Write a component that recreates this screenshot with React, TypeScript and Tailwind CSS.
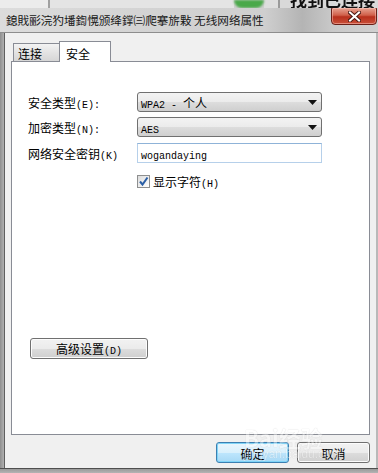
import type { ReactNode } from 'react'

const cjk = "font-['Noto_Sans_CJK_SC',sans-serif]"
const mono = "font-['Liberation_Mono','Noto_Sans_CJK_SC',monospace]"

// SimSun-like mixed text: CJK at 12px, latin as narrow mono
function Sim({ text }: { text: string }) {
  const parts = text.split(/([\u3000-\u9fff\uff00-\uffef]+)/).filter(Boolean)
  return (
    <span className="whitespace-pre">
      {parts.map((p, i) =>
        /[\u3000-\u9fff\uff00-\uffef]/.test(p) ? (
          <span key={i} className={`${cjk} text-[12px]`}>
            {p}
          </span>
        ) : (
          <span key={i} className={`${mono} text-[10px]`}>
            {p}
          </span>
        ),
      )}
    </span>
  )
}

function Combo({ value }: { value: string }) {
  return (
    <div className="flex h-[20px] w-[185px] items-center justify-between rounded-[3px] border border-[#707070] bg-[linear-gradient(#f3f3f3,#ebebeb_50%,#dddddd_50%,#cfcfcf)] pl-[3px] pr-[4px] leading-none text-black">
      <Sim text={value} />
      <svg width="9" height="5" viewBox="0 0 9 5">
        <path d="M0 0h9L4.5 5z" fill="#111" />
      </svg>
    </div>
  )
}

function WinButton({ children, primary, className }: { children: ReactNode; primary?: boolean; className?: string }) {
  return (
    <div
      className={`flex items-center justify-center rounded-[3px] border leading-none text-black ${
        primary
          ? 'border-[#3c7fb1] bg-[linear-gradient(#eaf6fd,#d9f0fc_50%,#bee6fd_50%,#a7d9f5)] shadow-[inset_0_0_0_1px_#7fd4f7]'
          : 'border-[#707070] bg-[linear-gradient(#f2f2f2,#ebebeb_50%,#dddddd_50%,#cfcfcf)] shadow-[inset_0_0_0_1px_#fcfcfc]'
      } ${className ?? ''}`}
    >
      {children}
    </div>
  )
}

export default function App() {
  return (
    <div className="relative h-[473px] w-[378px] overflow-hidden bg-[#a3a3a3] text-black">
      {/* glass title bar */}
      <div className="relative flex h-[33px] items-start border-b border-[#8d8d8d] bg-[linear-gradient(to_right,#dcdcdc,#d3d3d3_40%,#cfcfcf_70%,#b4b4b4_80%,#c9c9c9_88%,#d0d0d0)]">
        <div className="absolute left-0 right-0 top-0 flex h-[8px] overflow-hidden">
          <div className="w-[48px] bg-[#ececec]" />
          <div className="w-[2px] bg-[#a0a0a0]" />
          <div className="w-[184px] bg-[#e4e4e4]" />
          <div className="h-[8px] w-[30px] rounded-b-full bg-[#4aa94a] blur-[1px]" />
          <div className="w-[14px] bg-[#dedede]" />
          <div className="w-[2px] bg-[#9a9a9a]" />
          <div className="flex-1 overflow-hidden bg-[#d9d9d9] pl-[10px]">
            <div className={`${cjk} -mt-[9px] text-[17px] font-bold leading-none text-[#111] blur-[0.4px]`}>找到已连接的</div>
          </div>
        </div>
        <div className={`${cjk} pl-[6px] pt-[12px] text-[11.6px] leading-[16px] text-[#161616]`}>
          鎴戝彨浣犳墦鍧愰颁绛鐣㈢爬搴旂敤 无线网络属性
        </div>
        <div className="ml-auto mr-[1px] mt-[7px] flex h-[18px] w-[46px] items-center justify-center rounded-b-[4px] rounded-t-[2px] border border-[#6a2018] bg-[linear-gradient(#e8a493,#d0604a_45%,#b8301c_55%,#c9503a)] shadow-[inset_0_0_0_1px_rgba(255,200,190,0.5)]">
          <svg width="13" height="11" viewBox="0 0 13 11">
            <path d="M2 1.5l9 8M11 1.5l-9 8" stroke="#4a1a14" strokeWidth="4" strokeLinecap="square" />
            <path d="M2 1.5l9 8M11 1.5l-9 8" stroke="#ffffff" strokeWidth="2" strokeLinecap="square" />
          </svg>
        </div>
      </div>

      {/* frame + client area */}
      <div className="flex h-[435px]">
        <div className="w-[4px] bg-[linear-gradient(to_right,#8e8e8e,#b0b0b0)]" />
        <div className="flex flex-1 flex-col border-l border-[#5e5e5e] bg-[#f0f0f0] pl-[6px] pr-[6px] pt-[8px]">
          {/* tabs */}
          <div className="flex h-[20px] items-end pl-[2px]">
            <div className="flex h-[18px] w-[47px] items-center border border-b-0 border-[#898c95] bg-[linear-gradient(#f3f3f3,#e3e3e3_50%,#d6d6d6)] pl-[4px] leading-none">
              <Sim text="连接" />
            </div>
            <div className="relative z-10 -mb-px -ml-px flex h-[21px] w-[52px] items-start border border-b-0 border-[#898c95] bg-white pl-[6px] pt-[3px] leading-none">
              <Sim text="安全" />
            </div>
          </div>
          {/* tab panel */}
          <div className="flex h-[374px] w-[359px] flex-col border border-[#898c95] bg-white pl-[16px] pt-[30px]">
            <div className="grid grid-cols-[109px_185px] items-center">
              <div className="leading-none">
                <Sim text="安全类型(E):" />
              </div>
              <Combo value="WPA2 - 个人" />
              <div className="mt-[5px] leading-none">
                <Sim text="加密类型(N):" />
              </div>
              <div className="mt-[5px]">
                <Combo value="AES" />
              </div>
              <div className="mt-[6px] leading-none">
                <Sim text="网络安全密钥(K)" />
              </div>
              <div className="mt-[6px] flex h-[20px] items-center border border-[#b6d0ea] border-t-[#8fb3d8] bg-white pl-[3px] leading-none">
                <Sim text="wogandaying" />
              </div>
              <div />
              <div className="mt-[10px] flex items-center gap-[3px] leading-none">
                <div className="flex h-[13px] w-[13px] items-center justify-center border border-[#8e8f8f] bg-[linear-gradient(135deg,#dcdcdc,#ffffff)]">
                  <svg width="11" height="11" viewBox="0 0 11 11">
                    <path d="M2 5.5l2.5 3L9.5 1.5" fill="none" stroke="#2b5fa6" strokeWidth="2" />
                  </svg>
                </div>
                <Sim text="显示字符(H)" />
              </div>
            </div>
            <WinButton className="ml-[2px] mt-[148px] h-[21px] w-[118px]">
              <Sim text="高级设置(D)" />
            </WinButton>
          </div>
          {/* dialog buttons */}
          <div className="mt-[7px] flex justify-end gap-[8px]">
            <WinButton primary className="h-[21px] w-[73px]">
              <Sim text="确定" />
            </WinButton>
            <WinButton className="h-[21px] w-[73px]">
              <Sim text="取消" />
            </WinButton>
          </div>
        </div>
        <div className="w-[2px] bg-[#b9b9b9]" />
      </div>
      <div className="h-[5px] border-t border-[#4f4f4f] bg-[linear-gradient(#9a9a9a,#b4b4b4)]" />

      {/* baidu watermark */}
      <div className="pointer-events-none absolute left-[244px] top-[426px] flex flex-col items-start leading-none opacity-40">
        <span className={`${cjk} text-[22px] font-bold text-white [text-shadow:0_0_1px_#8a8a8a]`}>Bai经验</span>
        <span className="font-['Liberation_Sans',sans-serif] text-[12px] text-white [text-shadow:0_0_1px_#8a8a8a]">jingyan.baidu.com</span>
      </div>
    </div>
  )
}
